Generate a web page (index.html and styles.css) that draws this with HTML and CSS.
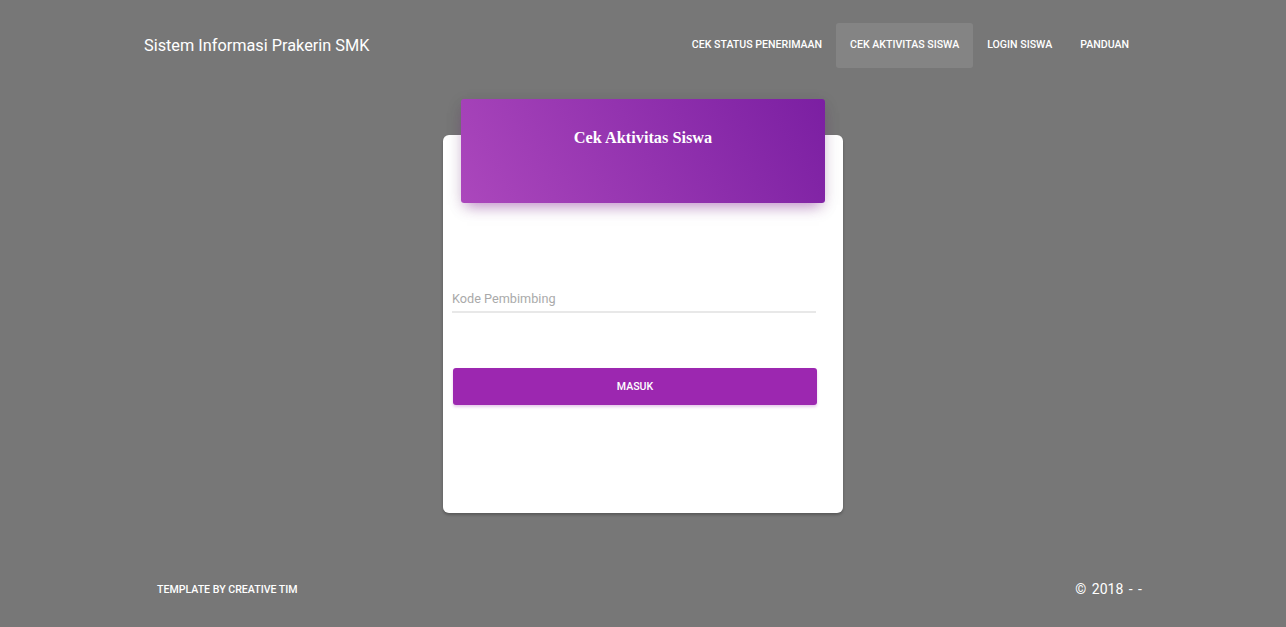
FILE: index.html
```html
<!DOCTYPE html>
<html>
<head>
<meta charset="utf-8">
<link rel="stylesheet" href="styles.css">
</head>
<body>
<div class="page">
  <nav class="navbar">
    <div class="container nav-inner">
      <a class="brand">Sistem Informasi Prakerin SMK</a>
      <ul class="nav">
        <li><a>CEK STATUS PENERIMAAN</a></li>
        <li class="active"><a>CEK AKTIVITAS SISWA</a></li>
        <li><a>LOGIN SISWA</a></li>
        <li><a>PANDUAN</a></li>
      </ul>
    </div>
  </nav>
  <main class="main">
    <div class="card">
      <div class="card-header">
        <h4 class="card-title">Cek Aktivitas Siswa</h4>
      </div>
      <div class="card-body">
        <div class="field">
          <input class="input" type="text" placeholder="Kode Pembimbing">
        </div>
        <button class="btn">MASUK</button>
      </div>
    </div>
  </main>
  <footer class="footer">
    <div class="container footer-inner">
      <a class="credit">TEMPLATE BY CREATIVE TIM</a>
      <div class="copy">© 2018 - -</div>
    </div>
  </footer>
</div>
</body>
</html>
```
FILE: styles.css
```css
* { box-sizing: border-box; }
html, body { margin: 0; padding: 0; }
body {
  background: #777777;
  font-family: Roboto, "Liberation Sans", sans-serif;
  color: #fff;
  width: 1286px;
  height: 627px;
  overflow: hidden;
}
.container {
  width: 1000px;
  margin: 0 auto;
}
.navbar {
  padding-top: 23px;
  height: 68px;
}
.nav-inner {
  display: flex;
  justify-content: space-between;
  align-items: center;
  height: 45px;
}
.brand {
  font-size: 16.3px;
  padding-left: 1px;
  color: #fff;
  line-height: 45px;
}
.nav {
  list-style: none;
  margin: 0;
  padding: 0;
  display: flex;
  height: 45px;
}
.nav li a {
  display: block;
  font-size: 10.6px;
  font-weight: 500;
  line-height: 43px;
  padding: 0 14px 2px 14px;
  border-radius: 3px;
  color: #fff;
}
.nav li.active a {
  background: rgba(255,255,255,0.1);
}
.main {
  display: flex;
  justify-content: center;
  padding-top: 67px;
  height: 478px;
}
.card {
  width: 400px;
  height: 378px;
  background: #fff;
  border-radius: 6px;
  box-shadow: 0 2px 3px rgba(0,0,0,0.25);
  padding: 0 18px;
}
.card-header {
  margin-top: -36px;
  height: 104px;
  border-radius: 3px;
  background: linear-gradient(60deg, #ab47bc, #7b1fa2);
  box-shadow: 0 8px 14px -6px rgba(156,39,176,0.5), 0 4px 16px rgba(0,0,0,0.12);
  padding-top: 28px;
  text-align: center;
}
.card-title {
  margin: 0;
  font-family: "Liberation Serif", "Times New Roman", serif;
  font-weight: 700;
  font-size: 16.3px;
  color: #fff;
  line-height: 22px;
}
.card-body {
  margin: 0 -9px 0 -9px;
  padding-top: 84px;
}
.field {
  width: 364px;
  border-bottom: 2px solid #e8e8e8;
}
.input {
  display: block;
  width: 100%;
  border: 0;
  outline: 0;
  background: transparent;
  font-family: Roboto, "Liberation Sans", sans-serif;
  font-size: 12.7px;
  padding: 0;
  height: 24px;
  line-height: 24px;
  color: #555;
}
.input::placeholder { color: #aaaaaa; }
.btn {
  display: block;
  margin: 55px 0 0 1px;
  width: 364px;
  height: 37px;
  border: 0;
  border-radius: 3px;
  background: #9c27b0;
  color: #fff;
  font-family: Roboto, "Liberation Sans", sans-serif;
  font-size: 10.6px;
  font-weight: 500;
  box-shadow: 0 2px 3px rgba(156,39,176,0.25);
  padding: 0;
}
.footer {
  padding-top: 31px;
}
.footer-inner {
  display: flex;
  justify-content: space-between;
  align-items: center;
  height: 24px;
}
.credit {
  font-size: 10.6px;
  font-weight: 500;
  padding-left: 14px;
  color: #fff;
}
.copy {
  font-size: 14px;
  padding-right: 1px;
  word-spacing: 2px;
}
```
